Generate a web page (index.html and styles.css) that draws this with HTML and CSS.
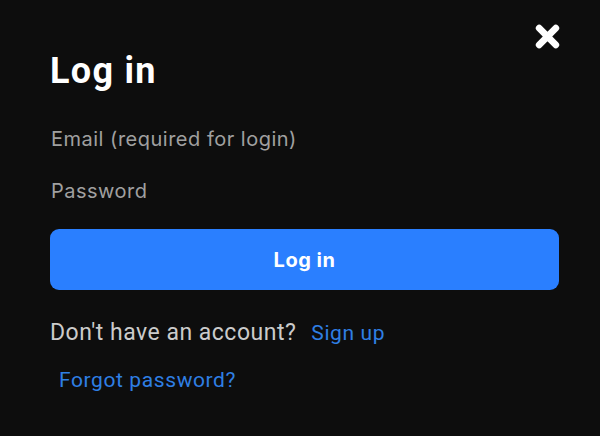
FILE: index.html
```html
<!DOCTYPE html>
<html>
<head>
<meta charset="utf-8">
<link rel="stylesheet" href="styles.css">
</head>
<body>
<div class="modal">
  <div class="close-row">
    <svg class="close" width="27" height="27" viewBox="0 0 26 26"><path d="M5 5 L21 21 M21 5 L5 21" stroke="#fff" stroke-width="6.5" stroke-linecap="round"/></svg>
  </div>
  <h1 class="title">Log in</h1>
  <div class="field">Email (required for login)</div>
  <div class="field">Password</div>
  <button class="btn">Log in</button>
  <div class="signup"><span class="muted">Don't have an account?</span><a class="link">Sign up</a></div>
  <div class="forgot"><a class="link">Forgot password?</a></div>
</div>
</body>
</html>
```
FILE: styles.css
```css
html, body { margin: 0; padding: 0; background: #0d0d0d; }
body { width: 600px; height: 436px; overflow: hidden; }
.modal { padding: 23px 39px 0 50px; display: flex; flex-direction: column; }
.close-row { display: flex; justify-content: flex-end; height: 27px; }
.close { display: block; }
.title { margin: 1px 0 0 0; font-family: Roboto, sans-serif; font-weight: 700; font-size: 36px; letter-spacing: 1.3px; line-height: 40px; color: #fff; }
.field { font-family: Inter, sans-serif; font-size: 20px; letter-spacing: 0.5px; color: #a0a0a0; padding-left: 1px; line-height: 24px; margin-top: 36px; }
.field + .field { margin-top: 28px; }
.btn { margin: 26px 2px 0 0; height: 61px; border: none; border-radius: 9px; background: #2a7fff; color: #fff; font-family: Inter, sans-serif; font-weight: 700; font-size: 20px; letter-spacing: 0.5px; }
.signup { margin-top: 30px; font-family: Roboto, sans-serif; font-size: 23px; line-height: 26px; display: flex; gap: 15px; }
.muted { color: #cbcbcb; letter-spacing: 0.5px; }
.link { color: #2f7fe4; font-size: 21px; letter-spacing: 0.6px; }
.forgot { margin-top: 21px; font-family: Roboto, sans-serif; font-size: 21px; line-height: 26px; padding-left: 9px; }
```
